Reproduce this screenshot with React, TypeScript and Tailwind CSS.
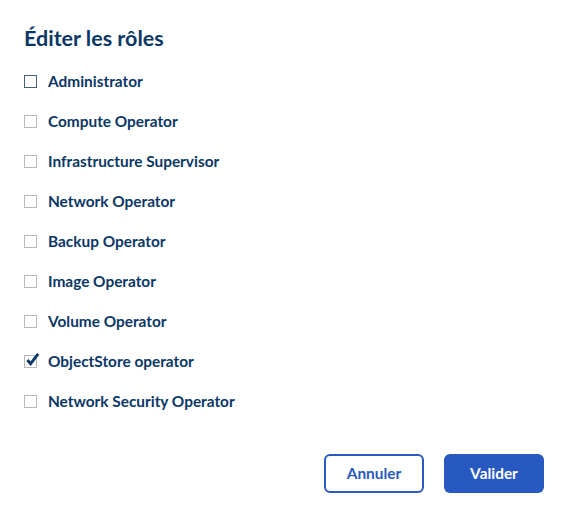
import { useState } from 'react'

const ROLES = [
  'Administrator',
  'Compute Operator',
  'Infrastructure Supervisor',
  'Network Operator',
  'Backup Operator',
  'Image Operator',
  'Volume Operator',
  'ObjectStore operator',
  'Network Security Operator',
]

function Box({ checked, focused }: { checked: boolean; focused?: boolean }) {
  return (
    <span
      className={`relative shrink-0 w-[13px] h-[13px] border bg-white ${
        focused ? 'border-[#4a5f7a]' : 'border-[#b9b9b9]'
      } ${checked ? 'border-[#7d7d7d]' : ''}`}
    >
      {checked && (
        <svg viewBox="0 0 16 16" className="absolute left-[0px] top-[-4px] w-[15px] h-[15px]">
          <path d="M2.5 8.5 L6 12.5 L14 2" fill="none" stroke="#0b3766" strokeWidth="3" />
        </svg>
      )}
    </span>
  )
}

export default function App() {
  const [selected, setSelected] = useState<string[]>(['ObjectStore operator'])

  function toggle(role: string) {
    setSelected((s) => (s.includes(role) ? s.filter((r) => r !== role) : [...s, role]))
  }

  return (
    <div
      className="w-[565px] h-[510px] bg-white px-6 pt-[24px] text-[#0b3766]"
      style={{ fontFamily: 'Lato, "Liberation Sans", sans-serif' }}
    >
      <h2 className="text-[21.5px] font-bold leading-[28px]">Éditer les rôles</h2>
      <ul className="mt-[10px]">
        {ROLES.map((role, i) => (
          <li key={role} className="h-10 flex items-center">
            <label className="flex items-center gap-[11px] cursor-pointer" onClick={() => toggle(role)}>
              <Box checked={selected.includes(role)} focused={i === 0} />
              <span className="text-[15.4px] font-bold">{role}</span>
            </label>
          </li>
        ))}
      </ul>
      <div className="flex justify-end gap-5 mt-[32px]">
        <button className="w-[100px] h-[39px] rounded-[6px] border-2 border-[#2859c0] text-[#2859c0] text-[15.4px] font-bold bg-white">
          Annuler
        </button>
        <button className="w-[100px] h-[39px] rounded-[6px] bg-[#2859c0] text-white text-[15.4px] font-bold mr-[-3px]">
          Valider
        </button>
      </div>
    </div>
  )
}
